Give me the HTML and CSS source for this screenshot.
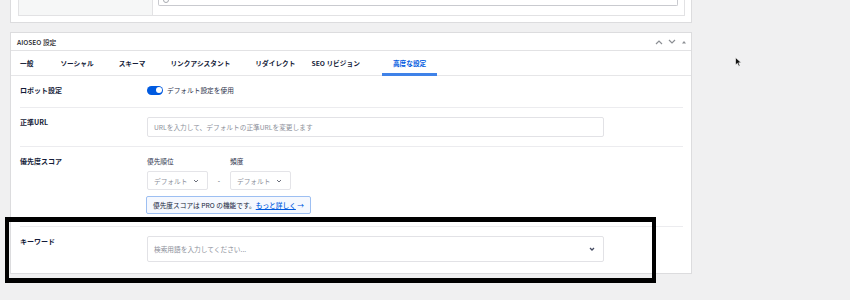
FILE: index.html
```html
<!DOCTYPE html>
<html lang="ja">
<head>
    <meta charset="UTF-8">
    <title>AIOSEO 設定</title>
    <link rel="stylesheet" href="styles.css">
</head>
<body>
    <div class="wrap">
        <!-- Previous metabox (cut off at the top) -->
        <div class="postbox prev-box">
            <div class="prev-inner">
                <div class="prev-label"></div>
                <div class="prev-field">
                    <div class="prev-input"><span class="prev-icon"></span></div>
                </div>
            </div>
        </div>

        <!-- AIOSEO settings metabox -->
        <div class="postbox seo-box">
            <div class="box-header">
                <span class="box-title">AIOSEO 設定</span>
                <div class="box-actions">
                    <svg width="8" height="6" viewBox="0 0 8 6"><path d="M1 5 4 2 7 5" fill="none" stroke="#8c8f94" stroke-width="1.2"/></svg>
                    <svg width="8" height="6" viewBox="0 0 8 6"><path d="M1 1 4 4 7 1" fill="none" stroke="#8c8f94" stroke-width="1.2"/></svg>
                    <svg width="6" height="6" viewBox="0 0 6 6"><path d="M1 4.5 3 2 5 4.5Z" fill="#8c8f94"/></svg>
                </div>
            </div>

            <div class="tabs">
                <span class="tab">一般</span>
                <span class="tab">ソーシャル</span>
                <span class="tab">スキーマ</span>
                <span class="tab">リンクアシスタント</span>
                <span class="tab">リダイレクト</span>
                <span class="tab tab-seo">SEO リビジョン</span>
                <span class="tab active">高度な設定</span>
            </div>

            <div class="settings">
                <!-- Robots -->
                <div class="row row-robots">
                    <div class="row-label">ロボット設定</div>
                    <div class="row-control toggle-wrap">
                        <span class="toggle"><span class="knob"></span></span>
                        <span class="toggle-text">デフォルト設定を使用</span>
                    </div>
                </div>

                <!-- Canonical URL -->
                <div class="row">
                    <div class="row-label">正準URL</div>
                    <div class="row-control">
                        <div class="input">URLを入力して、デフォルトの正準URLを変更します</div>
                    </div>
                </div>

                <!-- Priority score -->
                <div class="row row-priority">
                    <div class="row-label">優先度スコア</div>
                    <div class="row-control">
                        <div class="priority-fields">
                            <div class="priority-field">
                                <div class="sub-label">優先順位</div>
                                <div class="select">デフォルト
                                    <svg width="6" height="4" viewBox="0 0 6 4"><path d="M1 1 3 3 5 1" fill="none" stroke="#6b6f7b" stroke-width="1"/></svg>
                                </div>
                            </div>
                            <span class="dash">-</span>
                            <div class="priority-field">
                                <div class="sub-label">頻度</div>
                                <div class="select">デフォルト
                                    <svg width="6" height="4" viewBox="0 0 6 4"><path d="M1 1 3 3 5 1" fill="none" stroke="#6b6f7b" stroke-width="1"/></svg>
                                </div>
                            </div>
                        </div>
                        <div class="pro-note">優先度スコアは PRO の機能です。<a class="pro-link">もっと詳しく</a> <span class="arrow">→</span></div>
                    </div>
                </div>

                <!-- Keywords -->
                <div class="row row-keywords">
                    <div class="row-label">キーワード</div>
                    <div class="row-control">
                        <div class="input input-tall">
                            <span>検索用語を入力してください...</span>
                            <svg width="6" height="4" viewBox="0 0 6 4"><path d="M1 1 3 3 5 1" fill="none" stroke="#434960" stroke-width="1.3"/></svg>
                        </div>
                    </div>
                </div>
            </div>
        </div>
    </div>

    <!-- Highlight frame drawn over the screenshot -->
    <div class="highlight"></div>

    <!-- Mouse pointer -->
    <svg class="cursor" width="7" height="10" viewBox="0 0 7 10">
        <path d="M0.5 0.5 L0.5 8 L2.4 6.3 L3.8 9.3 L5 8.7 L3.7 5.8 L6.3 5.8 Z" fill="#111" stroke="#fff" stroke-width="0.6"/>
    </svg>
</body>
</html>
```

FILE: styles.css
```css
body {
    margin: 0;
    background-color: #f0f0f1;
    font-family: "Noto Sans CJK JP", "Noto Sans", sans-serif;
    font-size: 6.7px;
    line-height: 10px;
    color: #141b38;
    height: 300px;
    overflow: hidden;
}

.wrap {
    width: 682px;
    margin-left: 10px;
}

.postbox {
    background-color: #fff;
    border: 1px solid #dcdcde;
    box-sizing: border-box;
}

/* previous metabox, only its bottom is visible */
.prev-box {
    height: 23px;
    border-top: none;
    padding: 0 6px 0 7px;
}

.prev-inner {
    display: flex;
    height: 15px;
    border: 1px solid #e2e2e4;
    border-top: none;
}

.prev-label {
    width: 133px;
    background-color: #f6f7f7;
    border-right: 1px solid #e2e2e4;
}

.prev-field {
    flex: 1;
    padding: 0 6px 0 5px;
}

.prev-input {
    height: 5px;
    border: 1px solid #c9cacf;
    border-top: none;
    border-radius: 0 0 2px 2px;
    position: relative;
}

.prev-icon {
    position: absolute;
    left: 4px;
    top: -3px;
    width: 4px;
    height: 4px;
    border: 1px solid #a7aab0;
    border-radius: 50%;
}

.seo-box {
    margin-top: 9px;
    height: 242px;
}

.box-header {
    display: flex;
    align-items: center;
    justify-content: space-between;
    height: 17px;
    padding: 0 4px 0 6px;
    border-bottom: 1px solid #e2e2e4;
}

.box-title {
    font-weight: 500;
    color: #1d2327;
}

.box-actions {
    display: flex;
    align-items: center;
    gap: 5px;
}

.tabs {
    display: flex;
    height: 24px;
    border-bottom: 1px solid #e6e6e8;
}

.tab {
    display: flex;
    align-items: center;
    padding: 1px 11px 0;
    margin-right: 3px;
    font-weight: bold;
    white-space: nowrap;
    border-bottom: 2px solid transparent;
    margin-bottom: -1px;
}

.tab:first-child {
    padding-left: 9px;
    padding-right: 13px;
}

.tab-seo {
    padding-left: 2px;
    padding-right: 19px;
}

.tab.active {
    color: #005ae0;
    border-bottom: 3px solid #3f82e8;
}

.settings {
    padding: 0 8px 0 9px;
}

.row {
    display: grid;
    grid-template-columns: 127px 1fr;
    padding: 9px 0;
    border-bottom: 1px solid #ececef;
}

.row:last-child {
    border-bottom: none;
}

.row-robots {
    padding-bottom: 12px;
}

.row-priority {
    padding-bottom: 12px;
}

.row-label {
    font-size: 7px;
    font-weight: bold;
}

.toggle-wrap {
    display: flex;
    align-items: center;
    gap: 4px;
}

.toggle {
    width: 16px;
    height: 9px;
    border-radius: 5px;
    background-color: #005ae0;
    position: relative;
}

.knob {
    position: absolute;
    right: 1.5px;
    top: 1.5px;
    width: 6px;
    height: 6px;
    border-radius: 50%;
    background-color: #fff;
}

.toggle-text {
    color: #2c324c;
}

.input {
    width: 457px;
    height: 20px;
    box-sizing: border-box;
    border: 1px solid #e2e2e6;
    border-radius: 2px;
    padding: 0 6px;
    display: flex;
    align-items: center;
    color: #8c8f9a;
}

.input-tall {
    height: 26px;
    justify-content: space-between;
    padding-right: 8px;
}

.priority-fields {
    display: flex;
    align-items: flex-end;
}

.sub-label {
    color: #2c324c;
    margin-bottom: 5px;
}

.select {
    display: flex;
    align-items: center;
    justify-content: space-between;
    width: 61px;
    height: 19px;
    box-sizing: border-box;
    border: 1px solid #e4e4e8;
    border-radius: 2px;
    padding: 0 8px 0 6px;
    color: #8c8f9a;
}

.dash {
    width: 22px;
    text-align: center;
    line-height: 19px;
    color: #434960;
}

.pro-note {
    display: inline-block;
    margin-top: 6px;
    height: 18px;
    box-sizing: border-box;
    padding: 3px 6px 0 6px;
    border: 1px solid #9dbff2;
    border-radius: 2px;
    background-color: #f5f8fe;
    margin-left: -1px;
}

.pro-link {
    color: #005ae0;
    text-decoration: underline;
    font-weight: 500;
}

.arrow {
    color: #005ae0;
}

.highlight {
    position: absolute;
    left: 5px;
    top: 217px;
    width: 651px;
    height: 66px;
    box-sizing: border-box;
    border: 4px solid #000;
    border-top-width: 5px;
    border-bottom-width: 5px;
}

.cursor {
    position: absolute;
    left: 735px;
    top: 57px;
}
```
